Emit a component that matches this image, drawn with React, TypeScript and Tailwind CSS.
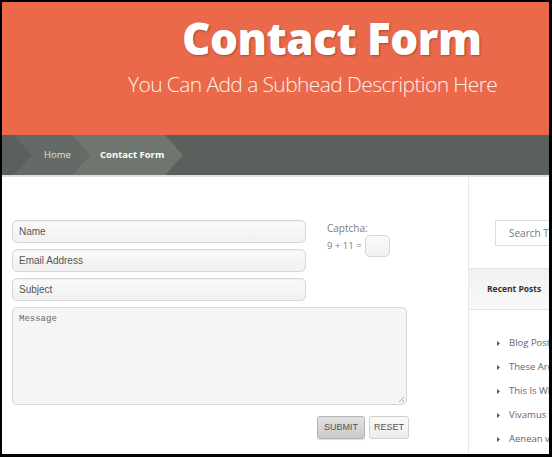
const posts = [
  "Blog Post Title Here",
  "These Are Not the Posts",
  "This Is What It Looks Like",
  "Vivamus vel sapien",
  "Aenean vitae dolor",
];

function Field({ label }: { label: string }) {
  return (
    <div className="flex h-[23px] items-center rounded-[5px] border border-[#d6d6d6] bg-gradient-to-b from-[#fafafa] to-[#f1f1f1] pl-[6px] text-[10px] text-[#555] shadow-[inset_0_1px_1px_rgba(0,0,0,0.04)]">
      {label}
    </div>
  );
}

export default function App() {
  return (
    <div
      className="h-[457px] w-[552px] overflow-hidden border-t-2 border-r-[3px] border-b-[3px] border-l-2 border-black bg-white"
      style={{ fontFamily: '"Open Sans", "Liberation Sans", sans-serif' }}
    >
      <header className="h-[133px] bg-[#e9694a] text-white">
        <h1 className="pt-[14px] pl-[180px] text-[44px] leading-[44px] font-extrabold tracking-[-0.5px] [text-shadow:1px_1px_2px_rgba(0,0,0,0.3)]">
          Contact Form
        </h1>
        <p className="mt-[13px] pl-[126px] text-[21px] leading-[22px] font-light tracking-[-0.6px] text-[#fdf0ec]">
          You Can Add a Subhead Description Here
        </p>
      </header>

      <nav className="flex h-[40px] items-stretch bg-[#5a605b] text-[9.5px]">
        <div className="ml-[11px] flex w-[77px] items-center bg-[#646a65] pl-[31px] text-[#dfe2df] [clip-path:polygon(0_0,59px_0,77px_50%,59px_100%,0_100%,19px_50%)]">
          Home
        </div>
        <div className="-ml-[18px] flex w-[111px] items-center bg-[#6f7670] pl-[28px] font-bold text-white [clip-path:polygon(0_0,93px_0,111px_50%,93px_100%,0_100%,18px_50%)]">
          Contact Form
        </div>
      </nav>
      <div className="h-[2px] bg-[#dfe1df]" />

      <main className="flex h-[277px]">
        <section className="w-[467px] shrink-0 border-r border-[#e8e8e8] pt-[43px] pl-[10px]" style={{ fontFamily: '"Liberation Sans", Arial, sans-serif' }}>
          <div className="flex">
            <div className="flex w-[294px] flex-col gap-[6px]">
              <Field label="Name" />
              <Field label="Email Address" />
              <Field label="Subject" />
            </div>
            <div className="ml-[21px] pt-[1px] text-[10px] leading-[14px] text-[#7a7a7a]" style={{ fontFamily: '"Open Sans", sans-serif' }}>
              <div>Captcha:</div>
              <div className="flex items-center gap-[3px] text-[9.5px]">
                <span>9 + 11 =</span>
                <div className="h-[22px] w-[25px] rounded-[5px] border border-[#d6d6d6] bg-gradient-to-b from-[#fafafa] to-[#f1f1f1]" />
              </div>
            </div>
          </div>
          <div className="relative mt-[6px] h-[98px] w-[395px] rounded-[5px] border border-[#d6d6d6] bg-[#f5f5f5] pt-[5px] pl-[6px] text-[9px] text-[#666]" style={{ fontFamily: '"Liberation Mono", monospace' }}>
            Message
            <svg className="absolute right-[1px] bottom-[1px]" width="8" height="8" viewBox="0 0 8 8">
              <path d="M7 2 L2 7 M7 5 L5 7" stroke="#aaa" strokeWidth="1" />
            </svg>
          </div>
          <div className="mt-[11px] flex w-[397px] justify-end gap-[4px] text-[9px] text-[#555]">
            <div className="flex h-[23px] w-[48px] items-center justify-center rounded-[3px] border border-[#b4b4b4] bg-gradient-to-b from-[#e2e2e2] to-[#c9c9c9] shadow-[0_1px_1px_rgba(0,0,0,0.15)]">
              SUBMIT
            </div>
            <div className="flex h-[23px] w-[40px] items-center justify-center rounded-[3px] border border-[#cfcfcf] bg-gradient-to-b from-[#fbfbfb] to-[#ececec]">
              RESET
            </div>
          </div>
        </section>

        <aside className="min-w-0 flex-1 overflow-hidden pt-[43px]">
          <div className="ml-[26px] flex h-[26px] w-[200px] items-center border border-[#dedede] pl-[13px] text-[10px] whitespace-nowrap text-[#777]">
            Search This Site
          </div>
          <div className="mt-[22px] flex h-[42px] w-[200px] items-center border-y border-[#e2e2e2] bg-gradient-to-b from-[#f0f0f0] to-[#fafafa] pl-[18px] text-[8.5px] font-bold whitespace-nowrap text-[#333]">
            Recent Posts
          </div>
          <ul className="mt-[25px] flex flex-col gap-[8px] text-[9.5px] text-[#666]">
            {posts.map((p) => (
              <li key={p} className="flex h-[16px] items-center whitespace-nowrap">
                <svg className="mr-[9px] ml-[28px] shrink-0" width="3" height="5" viewBox="0 0 3 5">
                  <path d="M0 0 L3 2.5 L0 5 Z" fill="#555" />
                </svg>
                {p}
              </li>
            ))}
          </ul>
        </aside>
      </main>
    </div>
  );
}
